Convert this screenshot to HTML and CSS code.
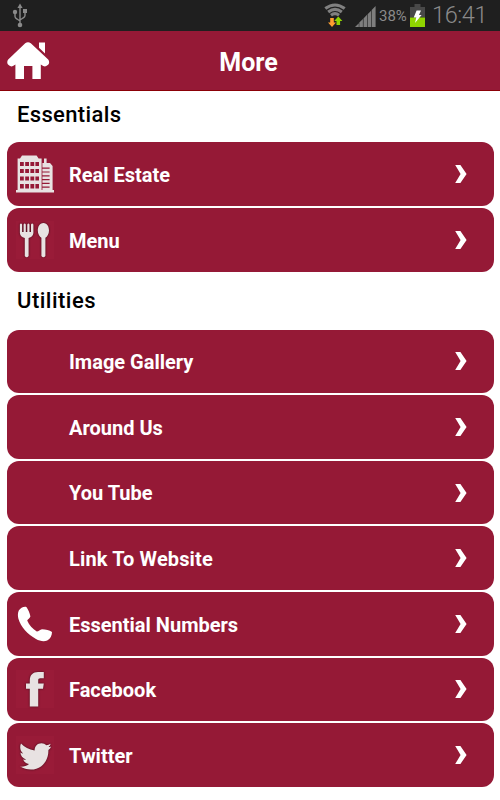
FILE: index.html
```
<!DOCTYPE html>
<html>
<head>
  <meta charset="utf-8">
  <title>More</title>
  <link rel="stylesheet" href="styles.css">
</head>
<body>
  <svg class="defs" width="0" height="0">
    <symbol id="chevron" viewBox="0 0 12 18">
      <path d="M0.2 0H5.4L11.6 9L5.4 18H0.2L5.6 9Z" fill="#fff"/>
    </symbol>
  </svg>

  <div class="status-bar">
    <svg class="usb" width="16" height="26" viewBox="0 0 16 26" fill="none" stroke="#8a8a8a" stroke-width="1.4">
      <path d="M8 4V21M3 10V13.5Q3 15 5 16L8 18M13 9V12.5Q13 14 11 15L8 17"/>
      <path d="M8 0.5L10.6 5H5.4Z" fill="#8a8a8a" stroke="none"/>
      <circle cx="8" cy="22" r="2.3" fill="#8a8a8a" stroke="none"/>
      <circle cx="3" cy="9" r="2.2" fill="#8a8a8a" stroke="none"/>
      <path d="M11 6H15V10H11Z" fill="#8a8a8a" stroke="none"/>
    </svg>
    <div class="status-right">
      <svg class="wifi" width="22" height="25" viewBox="0 0 22 25">
        <g fill="none" stroke="#808080" stroke-width="3.1">
          <path d="M1.3 5.6Q11 -1.6 20.7 5.6"/>
          <path d="M4.2 8.9Q11 3.7 17.8 8.9"/>
          <path d="M7 12.2Q11 9 15 12.2"/>
        </g>
        <path d="M6.2 15H9.8V19.4H12L8 24L4 19.4H6.2Z" fill="#ff9f30"/>
        <path d="M12.5 22H16.1V18H18.4L14.3 13.4L10.2 18H12.5Z" fill="#8fd400"/>
      </svg>
      <svg class="signal" width="21" height="21" viewBox="0 0 21 21">
        <path d="M0 21L3.8 17.2V21ZM4.3 21V16.5L7.9 13V21ZM8.5 21V12.4L12 8.8V21ZM12.6 21V8.2L16.1 4.7V21ZM16.7 21V4L20.6 0V21Z" fill="#7e7e7e"/>
      </svg>
      <span class="percent">38%</span>
      <svg class="battery" width="15" height="23" viewBox="0 0 15 23">
        <path d="M4.5 0H10.5V3H15V13.5H0V3H4.5Z" fill="#484848"/>
        <path d="M0 13.5H15V23H0Z" fill="#8fd400"/>
        <path d="M6.6 6.5H11L9 11H11.6L5 19L6.3 13.4H3.7Z" fill="#fff"/>
      </svg>
      <span class="clock">16:41</span>
    </div>
  </div>

  <div class="header">
    <svg class="home" width="43" height="38" viewBox="0 0 43 38" fill="#fff">
      <path d="M18.2 1.2Q21 -0.8 23.8 1.2L41.2 17.6Q43 20 41.4 22.6Q39 25.2 36.2 24L33.8 22.6V37H25.4V24H17V37H8.4V22.6L6 24Q3.4 25.2 1 22.6Q-0.6 20 1.2 17.6Z"/>
      <path d="M32 0.6H38V11.4L32 5.8Z"/>
    </svg>
    <h1>More</h1>
  </div>

  <h2>Essentials</h2>
  <div class="list">
    <a class="row">
      <span class="icon">
        <svg width="38" height="38" viewBox="0 0 38 38" fill="#e8e2e2">
          <path fill-rule="evenodd" d="M1.6 35V3.4H4L6 0.6H20.6L22.6 3.4H25.6V35H38V37.6H0V35ZM4 7V11H7.8V7ZM9.2 7V11H13V7ZM14.4 7V11H18.2V7ZM19.4 7V11H23V7ZM4 14V18H7.8V14ZM9.2 14V18H13V14ZM14.4 14V18H18.2V14ZM19.4 14V18H23V14ZM4 21.4V25.4H7.8V21.4ZM9.2 21.4V25.4H13V21.4ZM14.4 21.4V25.4H18.2V21.4ZM19.4 21.4V25.4H23V21.4ZM4 29V33.4H7.8V29ZM9.2 29V33.4H13V29ZM14.4 29V33.4H18.2V29ZM19.4 29V33.4H23V29Z"/>
          <path fill-rule="evenodd" d="M26.4 8H28V3.4H30.6V8H34L36.6 11V36H26.4ZM26.4 12.6V13.8H33.6V12.6ZM26.4 16.4V17.6H33.6V16.4ZM26.4 20.2V21.4H33.6V20.2ZM26.4 24V25.2H33.6V24ZM26.4 27.8V29H33.6V27.8ZM26.4 31.6V32.8H33.6V31.6Z"/>
        </svg>
      </span>
      <span class="label">Real Estate</span>
      <svg class="arrow" width="12" height="18"><use href="#chevron"/></svg>
    </a>
    <a class="row">
      <span class="icon shaded">
        <svg width="38" height="38" viewBox="0 0 38 38" fill="#e8e2e2">
          <path d="M3.9 3.4Q5 1.8 6.1 3.4V11H7.6V3.4Q8.7 1.8 9.8 3.4V11H11.3V3.4Q12.4 1.8 13.5 3.4V11H15V3.4Q16.2 1.8 17.4 3.4V12Q17 15.8 12.6 17V35Q10.7 37.6 8.8 35V17Q4.2 15.8 3.9 12Z"/>
          <path d="M27.4 2C31.4 2 33 6 33 9.6C33 13.2 31.2 15.8 29.4 16.8V35Q27.4 37.6 25.4 35V16.8C23.6 15.8 21.8 13.2 21.8 9.6C21.8 6 23.4 2 27.4 2Z"/>
        </svg>
      </span>
      <span class="label">Menu</span>
      <svg class="arrow" width="12" height="18"><use href="#chevron"/></svg>
    </a>
  </div>

  <h2>Utilities</h2>
  <div class="list">
    <a class="row">
      <span class="icon"></span>
      <span class="label">Image Gallery</span>
      <svg class="arrow" width="12" height="18"><use href="#chevron"/></svg>
    </a>
    <a class="row">
      <span class="icon"></span>
      <span class="label">Around Us</span>
      <svg class="arrow" width="12" height="18"><use href="#chevron"/></svg>
    </a>
    <a class="row">
      <span class="icon"></span>
      <span class="label">You Tube</span>
      <svg class="arrow" width="12" height="18"><use href="#chevron"/></svg>
    </a>
    <a class="row">
      <span class="icon"></span>
      <span class="label wide">Link To Website</span>
      <svg class="arrow" width="12" height="18"><use href="#chevron"/></svg>
    </a>
    <a class="row">
      <span class="icon">
        <svg width="38" height="38" viewBox="0 0 38 38" fill="#fff">
          <path d="M2.8 5.6C4.6 3 7.4 1.4 10.4 2C12.4 5 13.8 8 14.4 11.6C13.6 13.6 12 14.2 11.2 15.6C13 20 16.6 24 20.8 26.4C22.6 26.4 24 24.8 26 24.2C29.8 24.2 33.4 25 36 27C36 30.6 34.4 33.8 31.2 35.4C28 37 23.6 36 20 34C11.6 29.4 4.8 21.8 2.4 13.8C1.6 10.8 1.8 7.8 2.8 5.6Z"/>
        </svg>
      </span>
      <span class="label">Essential Numbers</span>
      <svg class="arrow" width="12" height="18"><use href="#chevron"/></svg>
    </a>
    <a class="row">
      <span class="icon shaded">
        <svg width="38" height="38" viewBox="0 0 38 38" fill="#e8e2e2">
          <path d="M13.8 36.6V18.8H10V13.4H13.8V10.4C13.8 5 17 2 22 2H27.8V8.2H24.4C22.8 8.2 22.2 9 22.2 10.4V13.4H27.8L27 18.8H22.2V36.6Z"/>
        </svg>
      </span>
      <span class="label">Facebook</span>
      <svg class="arrow" width="12" height="18"><use href="#chevron"/></svg>
    </a>
    <a class="row">
      <span class="icon shaded">
        <svg width="38" height="38" viewBox="0 0 38 38" fill="#e8e2e2">
          <path d="M5 7.6C8.4 11.4 13 13.8 18.6 14.4C18.6 10 21.6 7.2 25.4 7.2C27.6 7.2 29 8 30.4 9.2C32 9 33.2 8.6 34.6 7.8C34.2 9.4 33.6 10.2 32.6 11C33.6 11 34.4 10.8 35.2 10.4C34.6 11.8 33.6 13 32.4 14C32.6 25 25.4 33.6 15 33.6C11 33.6 7.4 32.6 4.2 30.6C7.6 30.8 10.6 30 13 28C10.2 27.6 8 26 7.2 23.6C8.2 23.8 9 23.8 10 23.4C6.6 22.4 4.6 20 4.4 16.6C5.4 17.2 6.2 17.4 7.2 17.4C4.2 15 3.4 11 5 7.6Z"/>
        </svg>
      </span>
      <span class="label">Twitter</span>
      <svg class="arrow" width="12" height="18"><use href="#chevron"/></svg>
    </a>
  </div>
</body>
</html>
```
FILE: styles.css
```
body {
  margin: 0;
  height: 800px;
  overflow: hidden;
  background: #fff;
  font-family: Roboto, 'Liberation Sans', sans-serif;
}

.defs {
  display: block;
}

.status-bar {
  display: flex;
  align-items: flex-start;
  justify-content: space-between;
  height: 31px;
  padding: 0 14px 0 12px;
  box-sizing: border-box;
  background: #1f1f1f;
  color: #8a8a8a;
}

.usb {
  margin-top: 3px;
}

.status-right {
  display: flex;
  align-items: flex-start;
}

.wifi {
  margin: 3px 9px 0 0;
}

.signal {
  margin: 6px 3px 0 0;
}

.percent {
  width: 28px;
  margin-right: 3px;
  font-size: 15px;
  line-height: 32px;
  white-space: nowrap;
}

.battery {
  margin: 4px 7px 0 0;
}

.clock {
  width: 54px;
  font-size: 23.5px;
  font-weight: 350;
  line-height: 31px;
  letter-spacing: -0.4px;
  white-space: nowrap;
}

.header {
  display: grid;
  grid-template-columns: 50px 1fr 50px;
  align-items: center;
  height: 60px;
  padding: 0 10px 0 7px;
  box-sizing: border-box;
  background: #951936;
  border-bottom: 1px solid #8b0008;
}

.header h1 {
  margin: 4px 0 0;
  color: #fff;
  font-size: 25px;
  font-weight: 700;
  text-align: center;
}

h2 {
  margin: 0;
  padding: 8px 17px 0;
  height: 51.4px;
  box-sizing: border-box;
  font-size: 22px;
  font-weight: 500;
  line-height: 32px;
  letter-spacing: 0.35px;
  color: #000;
}

.list {
  display: flex;
  flex-direction: column;
  gap: 2.15px;
  padding: 0 6.5px;
}

.list + h2 {
  height: 58px;
  padding-top: 13px;
  letter-spacing: 0.5px;
}

.row {
  display: flex;
  align-items: center;
  height: 63.5px;
  padding: 0 26.5px 0 9.5px;
  box-sizing: border-box;
  border-radius: 12px;
  background: #951936;
  color: #fff;
}

.icon {
  width: 38px;
  height: 38px;
  margin-right: 15px;
}

.icon svg {
  display: block;
}

.shaded {
  background: #991b38;
}

.shaded svg {
  filter: drop-shadow(0 0 1px #3c0a18);
}

.label {
  flex: 1;
  padding-top: 1.5px;
  font-size: 20px;
  font-weight: 700;
}

.wide {
  letter-spacing: 0.14px;
}
```
